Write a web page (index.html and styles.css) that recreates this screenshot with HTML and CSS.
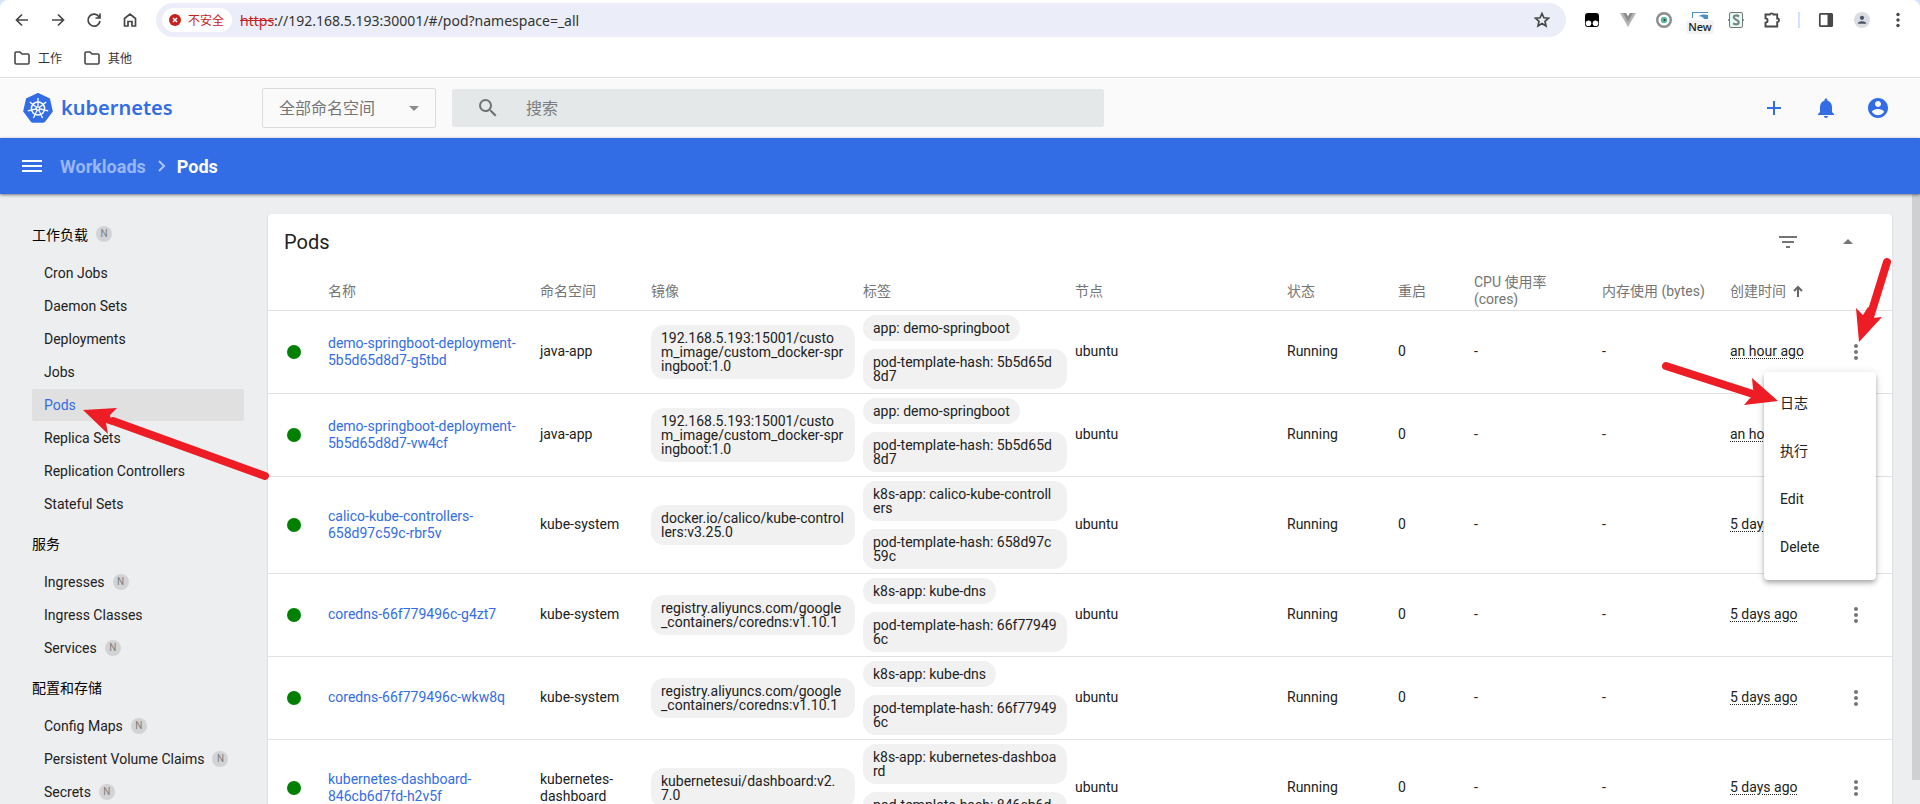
FILE: index.html
```html
<!DOCTYPE html>
<html lang="zh-CN">
<head>
    <meta charset="UTF-8">
    <meta name="viewport" content="width=device-width, initial-scale=1.0">
    <title>Kubernetes Dashboard</title>
    <link rel="stylesheet" href="styles.css">
</head>
<body>
    <svg class="sprite" aria-hidden="true">
        <symbol id="folder" viewBox="0 0 16 16">
            <path d="M1 3.2Q1 2 2.200 2H6l2 2h5.800Q15 4 15 5.200v7.600Q15 14 13.800 14H2.200Q1 14 1 12.800Z" fill="none" stroke="#474747" stroke-width="1.600"/>
        </symbol>
        <symbol id="dots" viewBox="0 0 24 24">
            <path d="M12 8c1.100 0 2-.9 2-2s-.9-2-2-2-2 .9-2 2 .9 2 2 2zm0 2c-1.100 0-2 .9-2 2s.9 2 2 2 2-.9 2-2-.9-2-2-2zm0 6c-1.100 0-2 .9-2 2s.9 2 2 2 2-.9 2-2-.9-2-2-2z"/>
        </symbol>
    </svg>

    <!-- browser toolbar -->
    <div class="browser">
        <div class="toolbar">
            <button class="tool" aria-label="Back"><svg viewBox="0 0 16 16"><path d="M14 8H3M8 2.500 2.500 8 8 13.500"/></svg></button>
            <button class="tool" aria-label="Forward"><svg viewBox="0 0 16 16"><path d="M2 8h11M8 2.500 13.500 8 8 13.500"/></svg></button>
            <button class="tool" aria-label="Reload"><svg viewBox="0 0 16 16"><path d="M13.200 5A6 6 0 1 0 14 9M14 1.500V6H9.500"/></svg></button>
            <button class="tool" aria-label="Home"><svg viewBox="0 0 16 16"><path d="M2.500 6.500 8 2l5.500 4.500V14H10V9.500H6V14H2.500Z"/></svg></button>
            <div class="address">
                <button class="insecure">
                    <svg viewBox="0 0 12 12" width="12" height="12"><circle cx="6" cy="6" r="6" fill="#c5221f"/><path d="m4 4 4 4m0-4-4 4" stroke="#fff" stroke-width="1.500"/></svg>
                    不安全
                </button>
                <span class="scheme">https</span>
                <input class="url" type="text" aria-label="Address" value="://192.168.5.193:30001/#/pod?namespace=_all">
                <button class="tool star" aria-label="Bookmark"><svg viewBox="0 0 16 16"><path d="m8 1.500 1.900 4.300 4.600.4-3.500 3.100 1 4.600L8 11.500l-4 2.400 1-4.600L1.500 6.200l4.600-.4Z"/></svg></button>
            </div>
            <div class="extensions">
                <button class="tool" aria-label="Scripts"><svg viewBox="0 0 16 16"><rect x="1" y="1" width="14" height="14" rx="3" fill="#000" stroke="none"/><circle cx="4.500" cy="11.200" r="2.800" fill="#fff" stroke="none"/><circle cx="11.500" cy="11.200" r="2.800" fill="#fff" stroke="none"/></svg></button>
                <button class="tool" aria-label="Vue devtools"><svg viewBox="0 0 16 16"><path d="M0 1h6l2 3.500L10 1h6L8 15Z" fill="#b5b5b5" stroke="none"/><path d="M3 1h3l2 3.500L10 1h3L8 10Z" fill="#8c8c8c" stroke="none"/></svg></button>
                <button class="tool" aria-label="Recorder"><svg viewBox="0 0 16 16"><circle cx="8" cy="8" r="6.800" fill="#fff" stroke="#8c8c8c" stroke-width="2.400"/><circle cx="8" cy="8" r="3.200" fill="#5db79f" stroke="none"/><circle cx="8.500" cy="8" r="1" fill="#333" stroke="none"/></svg></button>
                <button class="tool new" aria-label="New extension"><svg viewBox="0 0 16 16"><rect width="16" height="14" fill="#fff" stroke="none"/><path d="M0 0h16v1H1v5H0ZM6 4.500C10 1.500 14 2.500 16 3V7H12C11 5 9 4 6 4.500Z" fill="#4a90c2" stroke="none"/></svg><span class="new-label">New</span></button>
                <button class="tool" aria-label="Swagger"><svg viewBox="0 0 16 16"><rect x="1.500" y=".5" width="13" height="15" rx="1.500" fill="#e2fbf5" stroke="#777" stroke-width="1"/><path d="M0 8h2M14 8h2" stroke="#777"/><path d="M11 4.500C9 3 5.800 3 5.800 5.300c0 2.700 4.900 2 4.900 4.900 0 2.600-3.600 2.600-5.700 1.200" stroke="#7d8482" stroke-width="2.200"/></svg></button>
                <button class="tool" aria-label="Extensions"><svg viewBox="0 0 16 16"><path d="M1.500 2.500h4.300a1.900 1.700 0 0 1 3.600 0h3.800v4a1.800 1.800 0 0 1 0 3.600v4.400H1.500v-3.900a2 2 0 0 0 0-4.200Z" stroke-width="1.900"/></svg></button>
                <span class="divider"></span>
                <button class="tool" aria-label="Side panel"><svg viewBox="0 0 16 16"><rect x="1.800" y="1.800" width="12.400" height="12.400" rx=".8"/><path d="M9.500 2h5v12h-5z" fill="#474747" stroke="none"/></svg></button>
                <button class="tool" aria-label="Profile"><svg viewBox="0 0 16 16"><circle cx="8" cy="8" r="8" fill="#dadce3" stroke="none"/><circle cx="8" cy="5.800" r="2.100" fill="#4b5266" stroke="none"/><path d="M3.800 11.800q0-2.600 4.200-2.600t4.200 2.600Z" fill="#4b5266" stroke="none"/></svg></button>
                <button class="tool" aria-label="Browser menu"><svg viewBox="0 0 16 16"><g fill="#474747" stroke="none"><circle cx="8" cy="2.500" r="1.700"/><circle cx="8" cy="8" r="1.700"/><circle cx="8" cy="13.500" r="1.700"/></g></svg></button>
            </div>
        </div>
        <div class="bookmarks">
            <a href="#"><svg width="16" height="16"><use href="#folder"/></svg>工作</a>
            <a href="#"><svg width="16" height="16"><use href="#folder"/></svg>其他</a>
        </div>
    </div>

    <!-- dashboard header -->
    <header class="header">
        <a class="logo" href="#">
            <svg viewBox="0 0 30 30" width="30" height="30">
                <path d="M15 0.800 26.200 6 29 18.200 21.500 28.200Q21 29 20 29H10Q9 29 8.500 28.200L1 18.200 3.800 6Z" fill="#326de6" stroke="#326de6" stroke-width="1.600" stroke-linejoin="round"/>
                <g fill="none" stroke="#fff" stroke-width="1.500">
                    <circle cx="15" cy="15.500" r="6.600"/>
                    <path d="M15 5v10.500M15 15.500 23.200 9M15 15.500 6.800 9M15 15.500 25.200 17.800M15 15.500 4.800 17.800M15 15.500 19.600 25M15 15.500 10.400 25" stroke-width="1.300"/>
                </g>
                <circle cx="15" cy="15.500" r="2.200" fill="#fff"/>
                <circle cx="15" cy="15.500" r="1" fill="#326de6"/>
            </svg>
            <span>kubernetes</span>
        </a>
        <div class="namespace">
            <select aria-label="命名空间">
                <option>全部命名空间</option>
            </select>
        </div>
        <div class="search">
            <svg viewBox="0 0 24 24" width="24" height="24"><path d="M15.500 14h-.79l-.28-.27A6.470 6.470 0 0 0 16 9.500 6.500 6.500 0 1 0 9.500 16c1.610 0 3.090-.59 4.230-1.570l.27.28v.79l5 4.990L20.490 19l-4.990-5zm-6 0C7.010 14 5 11.990 5 9.500S7.010 5 9.500 5 14 7.010 14 9.500 11.990 14 9.500 14z"/></svg>
            <input type="search" placeholder="搜索" aria-label="搜索">
        </div>
        <div class="actions">
            <button aria-label="Create"><svg viewBox="0 0 24 24"><path d="M19 13h-6v6h-2v-6H5v-2h6V5h2v6h6v2z"/></svg></button>
            <button aria-label="Notifications"><svg viewBox="0 0 24 24"><path d="M12 22c1.100 0 2-.9 2-2h-4c0 1.100.89 2 2 2zm6-6v-5c0-3.070-1.640-5.640-4.500-6.320V4c0-.83-.67-1.500-1.500-1.500s-1.500.67-1.500 1.500v.68C7.630 5.360 6 7.920 6 11v5l-2 2v1h16v-1l-2-2z"/></svg></button>
            <button aria-label="Account"><svg viewBox="0 0 24 24"><path d="M12 2C6.480 2 2 6.480 2 12s4.480 10 10 10 10-4.480 10-10S17.520 2 12 2zm0 3c1.660 0 3 1.340 3 3s-1.340 3-3 3-3-1.340-3-3 1.340-3 3-3zm0 14.200c-2.500 0-4.710-1.280-6-3.220.03-1.990 4-3.080 6-3.080 1.990 0 5.970 1.090 6 3.080-1.290 1.940-3.500 3.220-6 3.220z"/></svg></button>
        </div>
    </header>

    <div class="breadcrumbs">
        <button class="burger" aria-label="Menu"><svg viewBox="0 0 20 12" width="20" height="12"><path d="M0 1h20M0 6h20M0 11h20" stroke="#fff" stroke-width="2"/></svg></button>
        <a href="#">Workloads</a>
        <svg viewBox="0 0 8 12" width="8" height="12"><path d="m1 1 5 5-5 5" fill="none" stroke="#fff" stroke-opacity=".6" stroke-width="2"/></svg>
        <span class="current">Pods</span>
    </div>

    <div class="content">
        <nav class="sidebar">
            <a class="group" href="#">工作负载<span class="badge">N</span></a>
            <a class="item" href="#">Cron Jobs</a>
            <a class="item" href="#">Daemon Sets</a>
            <a class="item" href="#">Deployments</a>
            <a class="item" href="#">Jobs</a>
            <div class="marked">
                <a class="item active" href="#">Pods</a>
                <svg class="arrow arrow-nav" viewBox="0 0 190 74" width="190" height="74"><path d="M184 68 32 13" stroke-width="8"/><path d="M2 2 36 0 29 7 31 17 25 15 27 26Z" stroke="none"/></svg>
            </div>
            <a class="item" href="#">Replica Sets</a>
            <a class="item" href="#">Replication Controllers</a>
            <a class="item" href="#">Stateful Sets</a>
            <a class="group" href="#">服务</a>
            <a class="item" href="#">Ingresses<span class="badge">N</span></a>
            <a class="item" href="#">Ingress Classes</a>
            <a class="item" href="#">Services<span class="badge">N</span></a>
            <a class="group" href="#">配置和存储</a>
            <a class="item" href="#">Config Maps<span class="badge">N</span></a>
            <a class="item" href="#">Persistent Volume Claims<span class="badge">N</span></a>
            <a class="item" href="#">Secrets<span class="badge">N</span></a>
        </nav>

        <main class="card">
            <div class="card-header">
                <h1>Pods</h1>
                <button aria-label="Filter"><svg viewBox="0 0 24 24" width="24" height="24"><path d="M10 18h4v-2h-4v2zM3 6v2h18V6H3zm3 7h12v-2H6v2z"/></svg></button>
                <button aria-label="Collapse"><svg viewBox="0 0 24 24" width="24" height="24"><path d="m7 14 5-5 5 5z"/></svg></button>
            </div>
            <table>
                <colgroup>
                    <col class="c-dot"><col class="c-wide"><col class="c-mid"><col class="c-wide"><col class="c-wide"><col class="c-wide">
                    <col class="c-mid"><col class="c-restarts"><col class="c-usage"><col class="c-usage"><col class="c-age"><col class="c-menu">
                </colgroup>
                <thead>
                    <tr>
                        <th></th>
                        <th>名称</th>
                        <th>命名空间</th>
                        <th>镜像</th>
                        <th>标签</th>
                        <th>节点</th>
                        <th>状态</th>
                        <th>重启</th>
                        <th>CPU 使用率 (cores)</th>
                        <th>内存使用 (bytes)</th>
                        <th class="age"><button class="sort">创建时间<svg viewBox="0 0 12 12" width="12" height="12"><path d="M6 12V2M2 6l4-4 4 4" fill="none" stroke="#666" stroke-width="2"/></svg></button></th>
                        <th></th>
                    </tr>
                </thead>
                <tbody>
                    <tr>
                        <td><span class="dot"></span></td>
                        <td><a href="#">demo-springboot-deployment-5b5d65d8d7-g5tbd</a></td>
                        <td>java-app</td>
                        <td class="chips"><span class="chip">192.168.5.193:15001/custom_image/custom_docker-springboot:1.0</span></td>
                        <td class="chips"><span class="chip">app: demo-springboot</span><span class="chip">pod-template-hash: 5b5d65d8d7</span></td>
                        <td>ubuntu</td>
                        <td>Running</td>
                        <td>0</td>
                        <td>-</td>
                        <td>-</td>
                        <td class="age"><span class="time">an hour ago</span></td>
                        <td class="more">
                            <div class="menu-anchor">
                                <button aria-label="Actions"><svg viewBox="0 0 24 24"><use href="#dots"/></svg></button>
                                <div class="menu">
                                    <button>日志</button>
                                    <button>执行</button>
                                    <button>Edit</button>
                                    <button>Delete</button>
                                </div>
                                <svg class="arrow arrow-more" viewBox="0 0 36 86" width="36" height="86"><path d="M31 5 14 60" stroke-width="8"/><path d="M3 85 0 51 7 58 12 50 18 54 16 61 26 60Z" stroke="none"/></svg>
                                <svg class="arrow arrow-menu" viewBox="0 0 120 46" width="120" height="46"><path d="M6 6 96 35" stroke-width="8"/><path d="M118 41 92 18 93 29 96 35 90 38 84 45Z" stroke="none"/></svg>
                            </div>
                        </td>
                    </tr>
                    <tr>
                        <td><span class="dot"></span></td>
                        <td><a href="#">demo-springboot-deployment-5b5d65d8d7-vw4cf</a></td>
                        <td>java-app</td>
                        <td class="chips"><span class="chip">192.168.5.193:15001/custom_image/custom_docker-springboot:1.0</span></td>
                        <td class="chips"><span class="chip">app: demo-springboot</span><span class="chip">pod-template-hash: 5b5d65d8d7</span></td>
                        <td>ubuntu</td>
                        <td>Running</td>
                        <td>0</td>
                        <td>-</td>
                        <td>-</td>
                        <td class="age"><span class="time">an hour ago</span></td>
                        <td class="more"><button aria-label="Actions"><svg viewBox="0 0 24 24"><use href="#dots"/></svg></button></td>
                    </tr>
                    <tr>
                        <td><span class="dot"></span></td>
                        <td><a href="#">calico-kube-controllers-658d97c59c-rbr5v</a></td>
                        <td>kube-system</td>
                        <td class="chips"><span class="chip">docker.io/calico/kube-controllers:v3.25.0</span></td>
                        <td class="chips"><span class="chip">k8s-app: calico-kube-controllers</span><span class="chip">pod-template-hash: 658d97c59c</span></td>
                        <td>ubuntu</td>
                        <td>Running</td>
                        <td>0</td>
                        <td>-</td>
                        <td>-</td>
                        <td class="age"><span class="time">5 days ago</span></td>
                        <td class="more"><button aria-label="Actions"><svg viewBox="0 0 24 24"><use href="#dots"/></svg></button></td>
                    </tr>
                    <tr>
                        <td><span class="dot"></span></td>
                        <td><a href="#">coredns-66f779496c-g4zt7</a></td>
                        <td>kube-system</td>
                        <td class="chips"><span class="chip">registry.aliyuncs.com/google_containers/coredns:v1.10.1</span></td>
                        <td class="chips"><span class="chip">k8s-app: kube-dns</span><span class="chip">pod-template-hash: 66f779496c</span></td>
                        <td>ubuntu</td>
                        <td>Running</td>
                        <td>0</td>
                        <td>-</td>
                        <td>-</td>
                        <td class="age"><span class="time">5 days ago</span></td>
                        <td class="more"><button aria-label="Actions"><svg viewBox="0 0 24 24"><use href="#dots"/></svg></button></td>
                    </tr>
                    <tr>
                        <td><span class="dot"></span></td>
                        <td><a href="#">coredns-66f779496c-wkw8q</a></td>
                        <td>kube-system</td>
                        <td class="chips"><span class="chip">registry.aliyuncs.com/google_containers/coredns:v1.10.1</span></td>
                        <td class="chips"><span class="chip">k8s-app: kube-dns</span><span class="chip">pod-template-hash: 66f779496c</span></td>
                        <td>ubuntu</td>
                        <td>Running</td>
                        <td>0</td>
                        <td>-</td>
                        <td>-</td>
                        <td class="age"><span class="time">5 days ago</span></td>
                        <td class="more"><button aria-label="Actions"><svg viewBox="0 0 24 24"><use href="#dots"/></svg></button></td>
                    </tr>
                    <tr>
                        <td><span class="dot"></span></td>
                        <td><a href="#">kubernetes-dashboard-846cb6d7fd-h2v5f</a></td>
                        <td>kubernetes-dashboard</td>
                        <td class="chips"><span class="chip">kubernetesui/dashboard:v2.7.0</span></td>
                        <td class="chips"><span class="chip">k8s-app: kubernetes-dashboard</span><span class="chip">pod-template-hash: 846cb6d7fd</span></td>
                        <td>ubuntu</td>
                        <td>Running</td>
                        <td>0</td>
                        <td>-</td>
                        <td>-</td>
                        <td class="age"><span class="time">5 days ago</span></td>
                        <td class="more"><button aria-label="Actions"><svg viewBox="0 0 24 24"><use href="#dots"/></svg></button></td>
                    </tr>
                </tbody>
            </table>
        </main>
        <div class="scrollbar"></div>
    </div>
</body>
</html>
```
FILE: styles.css
```css
* {
    margin: 0;
    padding: 0;
    box-sizing: border-box;
}

body {
    display: flex;
    flex-direction: column;
    height: 100vh;
    overflow: hidden;
    background: #d3e3fd;
    color: #212121;
    font-family: Roboto, "Noto Sans CJK SC", sans-serif;
    font-size: 14px;
}

a {
    color: inherit;
    text-decoration: none;
}

button,
input,
select {
    border: none;
    background: none;
    color: inherit;
    font: inherit;
}

button {
    cursor: pointer;
}

.sprite {
    position: absolute;
    width: 0;
    height: 0;
}

/* browser toolbar */
.browser {
    flex-shrink: 0;
    background: #fff;
    border-bottom: 1px solid #e0e0e0;
    border-radius: 8px 8px 0 0;
}

.toolbar {
    display: flex;
    align-items: center;
    height: 40px;
    padding: 0 4px;
}

.tool {
    display: flex;
    align-items: center;
    justify-content: center;
    flex-shrink: 0;
    width: 36px;
    height: 36px;
}

.tool svg {
    width: 16px;
    height: 16px;
    fill: none;
    stroke: #474747;
    stroke-width: 1.7;
}

.address {
    display: flex;
    align-items: center;
    flex: 1;
    height: 34px;
    margin: 0 8px;
    padding: 0 8px 0 6px;
    background: #ebeef8;
    border-radius: 17px;
    font-family: "Noto Sans", "Noto Sans CJK SC", sans-serif;
}

.insecure {
    display: flex;
    align-items: center;
    gap: 7px;
    height: 24px;
    margin-right: 8px;
    padding: 0 8px 0 7px;
    background: #fff;
    border-radius: 12px;
    color: #c5221f;
    font-size: 12px;
}

.scheme {
    color: #c5221f;
    text-decoration: line-through;
}

.url {
    flex: 1;
    min-width: 0;
    color: #333;
}

.star {
    width: 32px;
}

.extensions {
    display: flex;
    align-items: center;
}

.new {
    position: relative;
}

.new-label {
    position: absolute;
    top: 18px;
    left: 4px;
    width: 28px;
    background: #f1f3f4;
    border-radius: 3px;
    color: #202124;
    font: 500 11px/14px "Noto Sans", sans-serif;
}

.divider {
    width: 2px;
    height: 16px;
    margin: 0 8px;
    background: #d3e3fd;
}

.bookmarks {
    display: flex;
    gap: 22px;
    height: 37px;
    padding: 0 14px 2px;
    color: #333;
    font-size: 12px;
}

.bookmarks a {
    display: flex;
    align-items: center;
    gap: 8px;
}

/* dashboard header */
.header {
    display: flex;
    align-items: center;
    flex-shrink: 0;
    height: 60px;
    padding: 0 16px 0 23px;
    background: #fafafa;
}

.logo {
    display: flex;
    align-items: center;
    gap: 8px;
    width: 239px;
    color: #326de6;
    font: 600 20px/30px "Noto Sans", sans-serif;
}

.namespace {
    position: relative;
    width: 174px;
    margin-right: 16px;
}

.namespace select {
    appearance: none;
    width: 100%;
    height: 40px;
    padding: 0 16px;
    border: 1px solid #dcdcdc;
    border-radius: 2px;
    color: #757575;
    font-size: 16px;
}

.namespace::after {
    content: "";
    position: absolute;
    top: 18px;
    right: 17px;
    border: 5px solid transparent;
    border-top-color: #8c8c8c;
    border-bottom: none;
}

.search {
    display: flex;
    align-items: center;
    flex: 0 1 652px;
    gap: 26px;
    height: 38px;
    padding: 0 24px;
    background: #e4e8e9;
    border-radius: 2px;
}

.search svg {
    fill: #6f7172;
}

.search input {
    flex: 1;
    font-size: 16px;
}

.search input::placeholder {
    color: #7b7d7e;
}

.actions {
    display: flex;
    margin-left: auto;
}

.actions button {
    display: flex;
    align-items: center;
    justify-content: center;
    width: 52px;
    height: 40px;
}

.actions svg {
    width: 24px;
    height: 24px;
    fill: #326de6;
}

.breadcrumbs {
    position: relative;
    z-index: 1;
    display: flex;
    align-items: center;
    flex-shrink: 0;
    height: 56px;
    padding: 0 22px;
    background: #326de6;
    box-shadow: 0 1px 3px rgba(0, 0, 0, 0.5);
    color: #fff;
    font-size: 18px;
    font-weight: 700;
}

.breadcrumbs svg {
    display: block;
}

.breadcrumbs a {
    margin: 0 12px 0 18px;
    color: rgba(255, 255, 255, 0.5);
}

.current {
    margin-left: 11px;
}

/* content */
.content {
    display: flex;
    flex: 1;
    min-height: 0;
    background: #edeef0;
}

.sidebar {
    flex: 0 0 268px;
    padding: 17px 24px 0 32px;
}

.group,
.item {
    display: flex;
    align-items: center;
}

.group {
    height: 45px;
    color: #000;
}

.item {
    height: 32px;
    margin-top: 1px;
    padding-left: 12px;
    border-radius: 2px;
}

.active {
    background: #e0e0e0;
    color: #326de6;
}

.marked {
    position: relative;
}

.badge {
    width: 16px;
    height: 16px;
    margin-left: 8px;
    background: #d2d3d4;
    border-radius: 50%;
    color: #808080;
    font-size: 10px;
    line-height: 16px;
    text-align: center;
}

.card {
    flex: 1;
    align-self: flex-start;
    margin: 20px 20px 24px 0;
    background: #fff;
    border-radius: 4px;
    box-shadow: 0 1px 2px rgba(0, 0, 0, 0.2);
}

.card-header {
    display: flex;
    align-items: center;
    gap: 36px;
    height: 56px;
    padding: 0 32px 0 16px;
}

.card-header h1 {
    flex: 1;
    font-size: 20px;
    font-weight: 400;
}

.card-header button {
    display: flex;
    height: 24px;
}

.card-header svg {
    fill: #757575;
}

table {
    width: 100%;
    table-layout: fixed;
    border-collapse: collapse;
    line-height: 17px;
}

.c-dot,
.c-menu {
    width: 60px;
}

.c-wide {
    width: 212px;
}

.c-mid {
    width: 111px;
}

.c-restarts {
    width: 76px;
}

.c-usage {
    width: 128px;
}

.c-age {
    width: 102px;
}

th,
td {
    padding: 0 16px 0 0;
    border-bottom: 1px solid #e0e0e0;
    text-align: left;
    vertical-align: middle;
}

th {
    height: 40px;
    padding-top: 3px;
    color: #757575;
    font-weight: 400;
}

td a {
    color: #326de6;
}

.age {
    padding-right: 0;
    white-space: nowrap;
}

.sort {
    display: flex;
    align-items: center;
    gap: 6px;
}

.dot {
    display: block;
    width: 14px;
    height: 14px;
    margin-left: 19px;
    background: #008000;
    border-radius: 50%;
}

.chips {
    padding: 0 8px 0 0;
}

.chip {
    display: block;
    width: fit-content;
    margin: 4px 0;
    padding: 6px 10px;
    background: #f1f1f1;
    border-radius: 13px;
    line-height: 14px;
    word-break: break-all;
}

.chip + .chip {
    margin-top: 8px;
}

.time {
    text-decoration: underline dotted 1px;
    text-underline-offset: 2px;
}

.more {
    padding: 0;
}

.more > button,
.menu-anchor > button {
    display: flex;
    align-items: center;
    justify-content: center;
    width: 48px;
    height: 48px;
}

.more button svg {
    width: 24px;
    height: 24px;
    fill: #757575;
}

.menu-anchor {
    position: relative;
    width: 48px;
}

.menu {
    position: absolute;
    z-index: 2;
    top: 44px;
    right: 4px;
    width: 112px;
    padding: 8px 0;
    background: #fff;
    border-radius: 4px;
    box-shadow: 0 2px 4px -1px rgba(0, 0, 0, 0.2), 0 4px 5px rgba(0, 0, 0, 0.14), 0 1px 10px rgba(0, 0, 0, 0.12);
}

.menu button {
    display: block;
    width: 100%;
    height: 48px;
    padding: 0 16px;
    text-align: left;
}

/* red pointers */
.arrow {
    position: absolute;
    z-index: 3;
    fill: #ee1c25;
    stroke: #ee1c25;
    stroke-linecap: round;
    pointer-events: none;
}

.arrow-nav {
    top: 19px;
    left: 49px;
}

.arrow-more {
    top: -71px;
    left: 24px;
}

.arrow-menu {
    top: 32px;
    right: 100px;
}

.scrollbar {
    flex: 0 0 8px;
    height: 96%;
    background: #cfd0d2;
}
```
